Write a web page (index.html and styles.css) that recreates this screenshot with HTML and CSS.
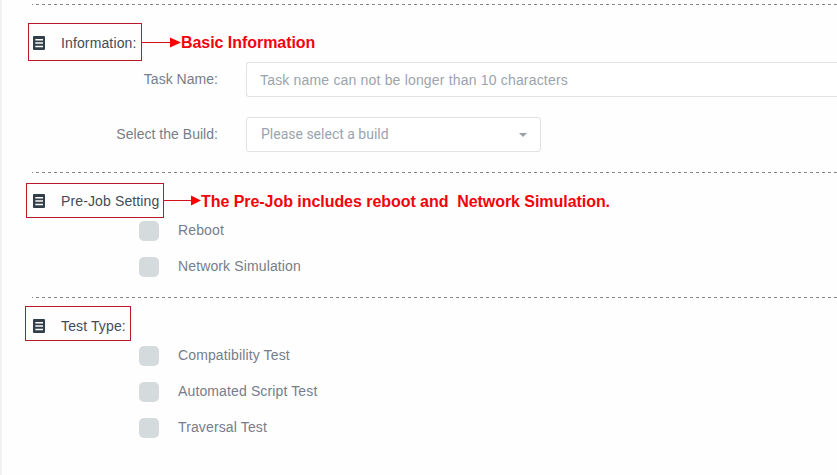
FILE: index.html
```html
<!DOCTYPE html>
<html lang="en">
<head>
<meta charset="utf-8">
<title>Task settings</title>
<link rel="stylesheet" href="styles.css">
</head>
<body>
<svg width="0" height="0" class="defs">
  <symbol id="list" viewBox="0 0 12 14"><path fill="#323f4a" fill-rule="evenodd" d="M1 0H11Q12 0 12 1V13Q12 14 11 14H1Q0 14 0 13V1Q0 0 1 0ZM2.3 3V4.5H10V3ZM2.3 6.3V7.8H10V6.3ZM2.3 9.7V11.2H10V9.7Z"/></symbol>
</svg>
<main class="page">
  <section class="section info">
    <h2 class="heading"><svg class="icon"><use href="#list"/></svg><span class="title">Information:</span>
      <span class="frame"></span>
      <span class="note"><svg class="arrow" width="39" height="12"><path d="M0 6.5H29" stroke="#d50f1c"/><path d="M28 1.5L39 6.5L28 11.5Z" fill="#f00"/></svg><span class="note-text">Basic Information</span></span>
    </h2>
    <div class="field">
      <label class="label" for="name">Task Name:</label>
      <input class="input" id="name" placeholder="Task name can not be longer than 10 characters">
    </div>
    <div class="field">
      <span class="label">Select the Build:</span>
      <div class="select"><span>Please select a build</span><i class="caret"></i></div>
    </div>
  </section>
  <section class="section prejob">
    <h2 class="heading"><svg class="icon"><use href="#list"/></svg><span class="title">Pre-Job Setting</span>
      <span class="frame"></span>
      <span class="note"><svg class="arrow" width="37" height="12"><path d="M0 6.5H28" stroke="#d50f1c"/><path d="M27 1.5L37 6.5L27 11.5Z" fill="#f00"/></svg><span class="note-text">The Pre-Job includes reboot and&nbsp; Network Simulation.</span></span>
    </h2>
    <div class="options">
      <div class="option"><i class="box"></i><span>Reboot</span></div>
      <div class="option"><i class="box"></i><span>Network Simulation</span></div>
    </div>
  </section>
  <section class="section types">
    <h2 class="heading"><svg class="icon"><use href="#list"/></svg><span class="title">Test Type:</span>
      <span class="frame"></span>
    </h2>
    <div class="options">
      <div class="option"><i class="box"></i><span>Compatibility Test</span></div>
      <div class="option"><i class="box"></i><span>Automated Script Test</span></div>
      <div class="option"><i class="box"></i><span>Traversal Test</span></div>
    </div>
  </section>
</main>
</body>
</html>
```
FILE: styles.css
```css
* { box-sizing: border-box; }
body {
  margin: 0;
  background: #fefefe;
  color: #767d8b;
  font: 14px/20px "Liberation Sans", Arial, sans-serif;
  letter-spacing: 0.13px;
  overflow: hidden;
}
.defs { display: block; }
.page {
  height: 475px;
  padding: 4px 0 0 30px;
  border-left: 2px solid #f1f1f1;
}
.section {
  background: repeating-linear-gradient(90deg, #858585 0 3px, transparent 3px 6px) -2px 0 / calc(100% + 2px) 1px no-repeat;
}
.info { height: 168px; padding-top: 29px; }
.prejob { height: 125px; padding-top: 19px; }
.types { padding-top: 19px; }
.heading {
  position: relative;
  display: flex;
  align-items: center;
  height: 20px;
  margin: 0;
  color: #454b57;
  font-size: 14px;
  font-weight: normal;
}
.icon { width: 12px; height: 14px; margin: 0 16px 0 1px; }
.frame { position: absolute; border: 1px solid #b91a2b; }
.info .frame { left: -4px; top: -10px; width: 114px; height: 38px; }
.prejob .frame { left: -6px; top: -8px; width: 138px; height: 35px; }
.types .frame { left: -7px; top: -10px; width: 106px; height: 35px; }
.note {
  position: absolute;
  top: -1px;
  display: flex;
  align-items: center;
  color: #f0040c;
  font-size: 16px;
  font-weight: bold;
  letter-spacing: -0.05px;
  white-space: nowrap;
}
.info .note { left: 110px; }
.prejob .note { left: 132px; }
.note-text { padding-top: 2px; }
.info .note-text { padding-top: 1px; }
.arrow { margin-top: -2px; }
.info .arrow { margin-top: -1px; }
.field { display: flex; height: 35px; margin-bottom: 20px; }
.info .heading { margin-bottom: 9px; }
.label { width: 186px; margin-right: 28px; line-height: 34px; text-align: right; letter-spacing: 0.03px; }
.input, .select {
  height: 35px;
  border: 1px solid #dfe3e6;
  border-radius: 3px;
  background: #fff;
  color: #99a4ae;
}
.input {
  flex: 1;
  min-width: 0;
  padding: 0 13px;
  border-right: 0;
  border-radius: 3px 0 0 3px;
  font: inherit;
  letter-spacing: 0.18px;
}
.input::placeholder { color: #99a4ae; opacity: 1; }
.select {
  display: flex;
  align-items: center;
  justify-content: space-between;
  width: 295px;
  padding: 0 13px 2px 14px;
  font-family: Roboto, sans-serif;
  letter-spacing: 0;
}
.caret { border: 4px solid transparent; border-top-color: #99a0a6; border-bottom: 0; margin-top: 2px; }
.options { padding: 10px 0 0 107px; }
.option { display: flex; align-items: center; gap: 19px; height: 20px; margin-bottom: 16px; }
.option span { margin-top: -2px; }
.box { width: 20px; height: 20px; border-radius: 5px; background: #d5dadd; }
```
